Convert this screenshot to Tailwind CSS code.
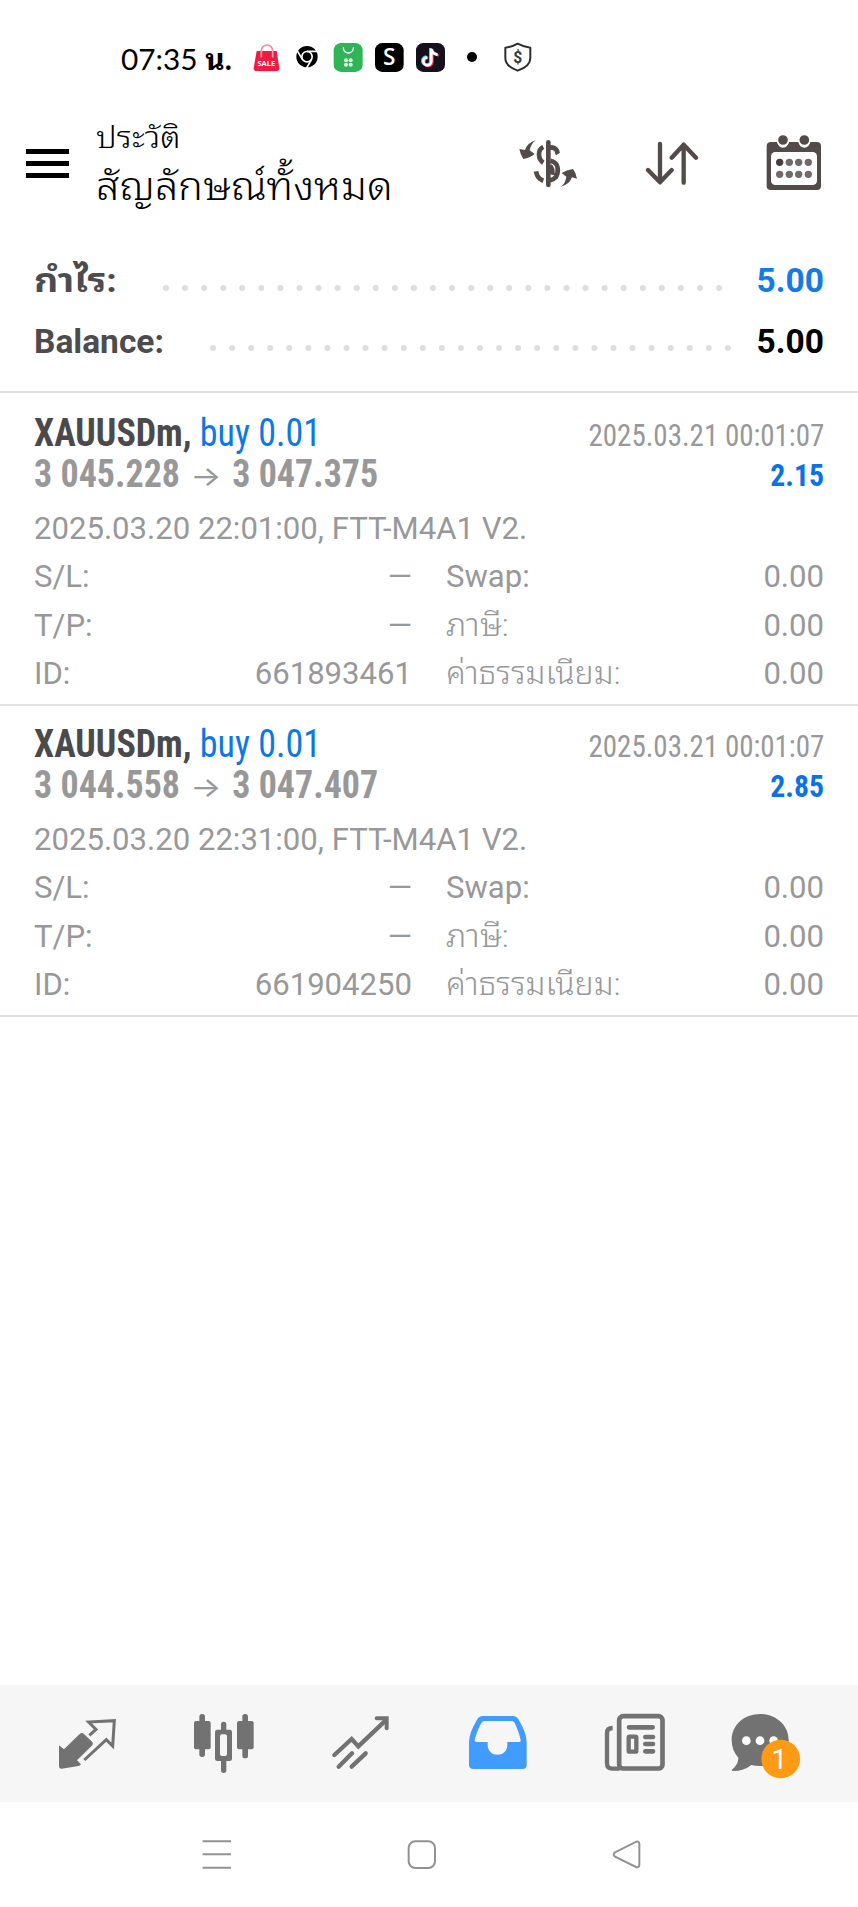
<!DOCTYPE html>
<html lang="th">
<head>
<meta charset="utf-8">
<title>ประวัติ</title>
<script src="https://cdn.jsdelivr.net/npm/@tailwindcss/browser@4"></script>
</head>
<body class="bg-white">
<div class="flex h-[1907px] w-[858px] flex-col overflow-hidden bg-white font-['Roboto','Noto_Sans_Thai_Looped','Loma','Garuda','Waree','Umpush','Laksaman',sans-serif] text-[#98989a]">

  <!-- Status bar -->
  <header class="flex h-[114px] shrink-0 items-start pl-[121px] pt-[37px] text-black">
    <div class="h-10 w-[132px] whitespace-nowrap font-['Lato','Noto_Sans_Thai_Looped','Loma',sans-serif] text-[29.5px] leading-[43px]"><span class="inline-block origin-left scale-x-[1.01]">07:35 <b class="font-bold">น.</b></span></div>
    <svg class="mt-[6px] h-[30px] w-[27px] overflow-visible" viewBox="459 39 81 90"><path d="M484 78V62a17 17 0 0 1 34 0v16" fill="none" stroke="#f58a98" stroke-width="5"/><path d="M470 63h60l8 52q0 8-8 8h-61q-9 0-8-8z" fill="#ee1c45"/><path d="M484 80V62M518 80V62" stroke="#f9a0ac" stroke-width="5" stroke-linecap="round"/><text x="499" y="108" font-size="21" font-weight="700" text-anchor="middle" fill="#fff" font-family="Open Sans" textLength="53" lengthAdjust="spacingAndGlyphs">SALE</text></svg>
    <svg class="ml-[16px] mt-[8px] h-[23px] w-[23px]" viewBox="589 47 69 69"><circle cx="622" cy="82" r="32"/><circle cx="622" cy="82" r="15.500" fill="none" stroke="#fff" stroke-width="5"/><path d="M622 66h31M608 90l-16-27M636 90l-16 27" stroke="#fff" stroke-width="5"/></svg>
    <svg class="ml-[14px] mt-[6px] h-[30px] w-[30px]" viewBox="700 39 90 90"><rect x="702" y="39" width="87" height="87" rx="22" fill="#2fb457"/><path d="M731 54a15 15 0 0 0 30 0" fill="none" stroke="#fff" stroke-width="4" stroke-linecap="round"/><g fill="#e8ffe9"><circle cx="739" cy="91" r="6"/><circle cx="753" cy="91" r="6"/><circle cx="739" cy="104" r="6"/><circle cx="753" cy="104" r="6"/></g></svg>
    <svg class="ml-[12px] mt-[6px] h-[30px] w-[29px] overflow-visible" viewBox="828 39 87 90"><rect x="828" y="39" width="86" height="87" rx="22"/><text x="871" y="106" font-size="68" text-anchor="middle" fill="#fff" font-family="Open Sans" font-weight="600">S</text></svg>
    <svg class="ml-[12px] mt-[6px] h-[30px] w-[30px]" viewBox="951 39 90 90"><rect x="951" y="39" width="87" height="87" rx="22" fill="#15101c"/><g fill="none" stroke-width="8"><path d="M997 56v38a12 12 0 1 1-12-12M997 57q2 15 19 17" stroke="#29e5e8" transform="translate(-3 -2)"/><path d="M997 56v38a12 12 0 1 1-12-12M997 57q2 15 19 17" stroke="#fb2e58" transform="translate(3 2)"/><path d="M997 56v38a12 12 0 1 1-12-12M997 57q2 15 19 17" stroke="#fff"/></g></svg>
    <svg class="ml-[21px] mt-[15px] h-[10px] w-[10px]" viewBox="0 0 10 10"><circle cx="5" cy="5" r="5"/></svg>
    <svg class="ml-[27px] mt-[6px] h-[30px] w-[28px] overflow-visible" viewBox="1212 39 84 90"><path d="M1253 41q18 10 38 12v31q0 25-38 38q-37-13-37-38V53q20-2 37-12z" fill="none" stroke="#2d2d2f" stroke-width="6" stroke-linejoin="round"/><text x="1253" y="99" font-size="47" font-weight="700" text-anchor="middle" fill="#3a3a3c" font-family="Roboto">$</text></svg>
  </header>

  <!-- App bar -->
  <div class="flex h-[126px] shrink-0 items-start text-black">
    <svg class="ml-[26px] mt-[35px] h-[29px] w-[43px]" viewBox="0 0 43 29"><path d="M0 0h43v5H0zM0 12h43v5H0zM0 24h43v5H0z"/></svg>
    <div class="ml-[27px] w-[423px] whitespace-nowrap font-light">
      <div class="h-[46px] text-[30px] leading-[47px]"><span class="inline-block origin-left scale-x-[1.09]">ประวัติ</span></div>
      <div class="h-[54px] text-[39px] leading-[55px]"><span class="inline-block origin-left scale-x-[1.07]">สัญลักษณ์ทั้งหมด</span></div>
    </div>
    <svg class="mt-[23px] h-[52px] w-[60px]" viewBox="87 81 180 156" fill="#524b49"><path d="M137 91Q124 99 119 121L134 132Q120 144 100 147Q91 134 88 117L105 120Q113 98 137 91z"/><path d="M211 231Q226 222 229 200L215 189Q229 180 249 177Q258 188 261 206L246 202Q238 224 211 231z"/><path d="M160 111q-13 6-13 22q0 17 13 25M138 184q4 22 22 28M180 112q17 0 21 11q1 6 3 9M181 152q20 4 22 22q2 16-6 28q-7 8-17 9M180 168q10 8 6 26" fill="none" stroke="#524b49" stroke-width="14"/><path d="M168 97a7 7 0 0 1 14 0v128a7 7 0 0 1-14 0z"/></svg>
    <svg class="ml-[66px] mt-[23px] h-[52px] w-[54px]" viewBox="466 81 162 156" fill="none" stroke="#524b49" stroke-width="13" stroke-linecap="round" stroke-linejoin="round"><path d="M511 102v114M475 180l36 37 35-37M582 218V104M546 143l36-39 37 39"/></svg>
    <svg class="ml-[67px] mt-[20px] h-[57px] w-[56px]" viewBox="831 72 168 171"><path d="M846 96h19a17 17 0 0 0 34 0h30a17 17 0 0 0 34 0h21q12 0 12 12v120q0 12-12 12H846q-13 0-13-12V108q0-12 13-12z" fill="#524b49"/><g fill="#524b49" stroke="#fff" stroke-width="5"><circle cx="882" cy="90" r="17"/><circle cx="946" cy="90" r="17"/></g><rect x="846" y="126" width="138" height="99" rx="13" fill="#fff"/><circle cx="872" cy="157" r="11" fill="#433d3c"/><g fill="#716a69"><circle cx="901" cy="157" r="11"/><circle cx="929" cy="157" r="11"/><circle cx="958" cy="157" r="11"/><circle cx="872" cy="193" r="11"/><circle cx="901" cy="193" r="11"/><circle cx="929" cy="193" r="11"/><circle cx="958" cy="193" r="11"/></g></svg>
  </div>

  <!-- Totals -->
  <section class="h-[153px] shrink-0 border-b-2 border-[#e2e2e2] px-[34px] pt-[10px] text-[33.5px] font-bold text-[#4c4c4f]">
    <div class="flex h-[61px] items-center justify-between leading-[62px]">
      <span class="w-[129px]"><span class="inline-block origin-left scale-x-[1.12]">กำไร:</span></span>
      <svg class="mt-[15px] h-[6px] w-[560px]" viewBox="0 0 560 6"><path d="M3 3h554" stroke="#dededf" stroke-width="6" stroke-linecap="round" stroke-dasharray="0 19.07"/></svg>
      <span class="w-[101px] text-right text-[#127be4]">5.00</span>
    </div>
    <div class="flex h-[61px] items-center leading-[61px]">
      <span class="w-[176px]"><span class="inline-block origin-left">Balance:</span></span>
      <svg class="mt-[12px] h-[6px] w-[522px]" viewBox="0 0 522 6"><path d="M3 3h516" stroke="#dededf" stroke-width="6" stroke-linecap="round" stroke-dasharray="0 19.07"/></svg>
      <span class="ml-auto text-right text-black">5.00</span>
    </div>
  </section>

  <!-- Closed deals -->
  <main class="grow pt-[2px]">
    <article class="h-[311px] border-b-2 border-[#e2e2e2] px-[34px] pt-[17px] whitespace-nowrap">
      <div class="flex h-[41px] justify-between font-['Roboto_Condensed','Roboto',sans-serif] text-[38.4px] leading-[41px]">
        <span class="inline-block origin-left scale-x-[0.937]"><b class="text-[#4a4a4d]">XAUUSDm,</b> <span class="text-[#0b78e8]">buy 0.01</span></span>
        <span class="inline-block origin-right scale-x-[0.92] text-[31.5px] leading-[47px]">2025.03.21 00:01:07</span>
      </div>
      <div class="flex h-[41px] justify-between font-['Roboto_Condensed','Roboto',sans-serif] text-[38.4px] font-bold leading-[41px]">
        <span class="inline-block origin-left scale-x-[0.937]">3 045.228 <span class="inline-flex w-[38px] justify-center align-[1px] font-['Inter'] text-[28px] leading-[30px] font-normal"><span class="scale-x-[1.25]">→</span></span> 3 047.375</span>
        <span class="inline-block origin-right scale-x-[0.96] text-[31px] leading-[46px] text-[#0b72e6]">2.15</span>
      </div>
      <div class="mt-[10px] grid auto-rows-[48.25px] grid-cols-[378px_34px_378px] text-[31.1px] leading-[49px]">
        <div class="col-span-3">2025.03.20 22:01:00, FTT-M4A1 V2.</div>
        <div class="flex justify-between"><span>S/L:</span><span>—</span></div><div></div><div class="flex justify-between"><span>Swap:</span><span>0.00</span></div>
        <div class="flex justify-between"><span>T/P:</span><span>—</span></div><div></div><div class="flex justify-between"><span class="origin-left scale-x-[1.07] font-light">ภาษี:</span><span>0.00</span></div>
        <div class="flex justify-between"><span>ID:</span><span>661893461</span></div><div></div><div class="flex justify-between"><span class="origin-left scale-x-[1.03] font-light">ค่าธรรมเนียม:</span><span>0.00</span></div>
      </div>
    </article>
    <article class="h-[311px] border-b-2 border-[#e2e2e2] px-[34px] pt-[17px] whitespace-nowrap">
      <div class="flex h-[41px] justify-between font-['Roboto_Condensed','Roboto',sans-serif] text-[38.4px] leading-[41px]">
        <span class="inline-block origin-left scale-x-[0.937]"><b class="text-[#4a4a4d]">XAUUSDm,</b> <span class="text-[#0b78e8]">buy 0.01</span></span>
        <span class="inline-block origin-right scale-x-[0.92] text-[31.5px] leading-[47px]">2025.03.21 00:01:07</span>
      </div>
      <div class="flex h-[41px] justify-between font-['Roboto_Condensed','Roboto',sans-serif] text-[38.4px] font-bold leading-[41px]">
        <span class="inline-block origin-left scale-x-[0.937]">3 044.558 <span class="inline-flex w-[38px] justify-center align-[1px] font-['Inter'] text-[28px] leading-[30px] font-normal"><span class="scale-x-[1.25]">→</span></span> 3 047.407</span>
        <span class="inline-block origin-right scale-x-[0.96] text-[31px] leading-[46px] text-[#0b72e6]">2.85</span>
      </div>
      <div class="mt-[10px] grid auto-rows-[48.25px] grid-cols-[378px_34px_378px] text-[31.1px] leading-[49px]">
        <div class="col-span-3">2025.03.20 22:31:00, FTT-M4A1 V2.</div>
        <div class="flex justify-between"><span>S/L:</span><span>—</span></div><div></div><div class="flex justify-between"><span>Swap:</span><span>0.00</span></div>
        <div class="flex justify-between"><span>T/P:</span><span>—</span></div><div></div><div class="flex justify-between"><span class="origin-left scale-x-[1.07] font-light">ภาษี:</span><span>0.00</span></div>
        <div class="flex justify-between"><span>ID:</span><span>661904250</span></div><div></div><div class="flex justify-between"><span class="origin-left scale-x-[1.03] font-light">ค่าธรรมเนียม:</span><span>0.00</span></div>
      </div>
    </article>
  </main>

  <!-- Tabs -->
  <nav class="flex h-[117px] shrink-0 bg-[#f6f6f6] pl-[58px] pt-[25px]">
    <svg class="h-[70px] w-[60px]" viewBox="174 120 180 210"><path d="M177 226l15 12 47-46q7-6 13 0l25 24q4 5 0 10l-46 45 12 12q-4 6-12 6l-46 7q-8 1-8-7z" fill="#727272"/><path d="M268 196l20-18-22-22 77-4-5 76-19-19-66 61" fill="none" stroke="#727272" stroke-width="9"/></svg>
    <svg class="ml-[76px] h-[70px] w-[60px]" viewBox="582 120 180 210" fill="#727272"><rect x="582" y="153" width="50" height="85" rx="6"/><rect x="598" y="132" width="17" height="129" rx="8"/><rect x="711" y="153" width="50" height="85" rx="6"/><rect x="727" y="132" width="17" height="133" rx="8"/><rect x="663" y="155" width="16" height="154" rx="8"/><rect x="645" y="179" width="51" height="94" rx="7"/><rect x="660" y="193" width="21" height="65" rx="6" fill="#f6f6f6"/></svg>
    <svg class="ml-[77px] h-[70px] w-[60px]" viewBox="993 120 180 210" fill="none" stroke="#727272" stroke-width="13" stroke-linecap="round"><path d="M1003 255l52-48 20 22 82-78M1016 290l40-40M1055 290l42-40"/><path d="M1130 145h30v30" stroke-width="12"/></svg>
    <svg class="ml-[77px] h-[70px] w-[60px]" viewBox="114 120 180 210"><path fill-rule="evenodd" d="M158 138h90q12 0 18 11q24 40 24 67v68q0 13-13 13H130q-13 0-13-13v-68q0-27 24-67q6-11 17-11zM163 153q-6 0-9 6-16 30-20 52 0 5 5 5h34v9c0 39 59 39 59 0v-9h36q5 0 4-5-4-22-18-52-3-6-9-6z" fill="#409dff"/></svg>
    <svg class="ml-[77px] h-[70px] w-[60px] overflow-visible" viewBox="528 120 180 210" fill="none" stroke="#727272"><rect x="570.500" y="138.500" width="130" height="157" rx="12" stroke-width="14"/><path d="M551 174q-17 0-17 15v91q0 16 16 16h22" stroke-width="13"/><g stroke-width="14" stroke-linecap="round"><path d="M600 172h71M649 201h23M649 222h23M649 244h23"/></g><rect x="599" y="200" width="23" height="45" rx="3" stroke-width="13"/></svg>
    <svg class="ml-[66px] h-[70px] w-[70px] overflow-visible" viewBox="906 120 210 210"><path d="M993 132c48 0 86 34 86 78s-38 78-86 78q-14 0-26-3-22 18-55 18-6-1-3-4 20-16 19-36-20-22-20-53c0-44 37-78 85-78z" fill="#727272"/><g fill="#fff"><circle cx="952" cy="212" r="13"/><circle cx="993" cy="212" r="13"/><circle cx="1034" cy="212" r="13"/></g><circle cx="1055" cy="267" r="58" fill="#ff9a15"/><text x="1051" y="297" font-size="84" text-anchor="middle" font-family="Roboto" font-weight="400" fill="#fff">1</text></svg>
  </nav>

  <!-- System navigation -->
  <footer class="flex h-[105px] shrink-0 pl-[202px] pt-[38px]">
    <svg class="h-[30px] w-[30px]" viewBox="606 510 90 90" fill="none" stroke="#929292" stroke-width="6"><path d="M608 514h85M608 553h85M608 593h85"/></svg>
    <svg class="ml-[175px] h-[30px] w-[30px]" viewBox="1221 510 90 90" fill="none" stroke="#929292" stroke-width="6"><rect x="1226" y="514" width="79" height="80" rx="20"/></svg>
    <svg class="ml-[175px] h-[30px] w-[30px]" viewBox="546 510 90 90" fill="none" stroke="#929292" stroke-width="6"><path d="M555 547L619 515q9-2 9 7v62q0 10-10 7L555 560q-8-6 0-13z"/></svg>
  </footer>
</div>
</body>
</html>
